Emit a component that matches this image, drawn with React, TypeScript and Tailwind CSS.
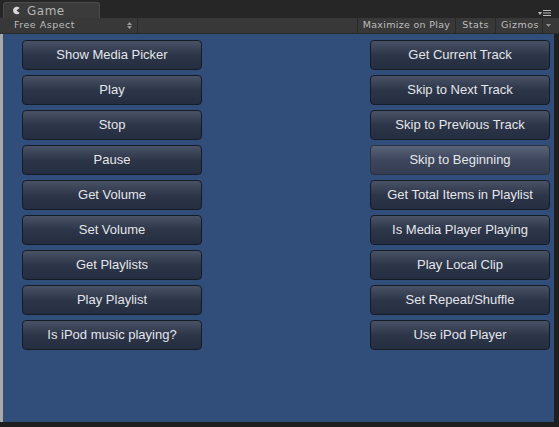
import React from 'react';

const leftButtons = [
  'Show Media Picker',
  'Play',
  'Stop',
  'Pause',
  'Get Volume',
  'Set Volume',
  'Get Playlists',
  'Play Playlist',
  'Is iPod music playing?',
];

const rightButtons = [
  'Get Current Track',
  'Skip to Next Track',
  'Skip to Previous Track',
  'Skip to Beginning',
  'Get Total Items in Playlist',
  'Is Media Player Playing',
  'Play Local Clip',
  'Set Repeat/Shuffle',
  'Use iPod Player',
];

function GuiButton({ label, hover }: { label: string; hover?: boolean }) {
  return (
    <div
      className={`w-[180px] h-[30px] rounded-[4px] border flex items-center justify-center text-[13px] text-[#e4e6ea] ${
        hover
          ? 'border-[#2a3142] bg-gradient-to-b from-[#5a6478] via-[#3d465c] to-[#343d52]'
          : 'border-[#161b28] bg-gradient-to-b from-[#4a5366] via-[#2d3549] to-[#252d40]'
      }`}
      style={{ fontFamily: '"Liberation Sans", Arial, sans-serif' }}
    >
      {label}
    </div>
  );
}

function Sep() {
  return <div className="w-px h-full bg-[#2a2a2a]" />;
}

export default function App() {
  return (
    <div
      className="w-[559px] h-[427px] bg-[#1f1f1f] flex flex-col overflow-hidden"
      style={{ fontFamily: '"DejaVu Sans", sans-serif' }}
    >
      {/* tab bar */}
      <div className="h-[18px] bg-[#262626] flex items-end pl-[3px] relative">
        <div className="w-[97px] h-[16px] bg-[#3b3b3b] rounded-t-[3px] border border-b-0 border-[#4a4a4a] flex items-center pl-[8px] gap-[6px]">
          <svg width="9" height="9" viewBox="0 0 10 10">
            <path d="M8.5 2.2 A4.2 4.2 0 1 0 8.5 7.8 L5 5 Z" fill="#d8d8d8" />
          </svg>
          <span className="text-[12px] text-[#b4b4b4] tracking-[0.5px]">Game</span>
        </div>
        <div className="absolute right-[8px] top-[10px] flex items-center gap-[1px]">
          <svg width="4" height="3" viewBox="0 0 4 3">
            <path d="M0 0 H4 L2 3 Z" fill="#bdbdbd" />
          </svg>
          <svg width="8" height="6" viewBox="0 0 8 6">
            <rect y="0" width="8" height="1" fill="#bdbdbd" />
            <rect y="2.5" width="8" height="1" fill="#bdbdbd" />
            <rect y="5" width="8" height="1" fill="#bdbdbd" />
          </svg>
        </div>
      </div>

      {/* toolbar */}
      <div className="h-[16px] bg-[#383838] border-b border-[#2a2a2a] flex items-center text-[9.5px] text-[#bdbdbd] tracking-[0.5px] pl-[3px] pr-[5px]">
        <div className="w-[134px] h-full flex items-center justify-between pl-[11px] pr-[5px]">
          <span>Free Aspect</span>
          <svg width="5" height="7" viewBox="0 0 5 7">
            <path d="M0 3 L2.5 0 L5 3 Z M0 4 L2.5 7 L5 4 Z" fill="#9a9a9a" />
          </svg>
        </div>
        <Sep />
        <div className="flex-1" />
        <Sep />
        <div className="px-[5px] h-full flex items-center tracking-[0.3px]">Maximize on Play</div>
        <Sep />
        <div className="px-[6px] h-full flex items-center">Stats</div>
        <Sep />
        <div className="pl-[5px] pr-[3px] h-full flex items-center">Gizmos</div>
        <Sep />
        <div className="px-[3px] h-full flex items-center">
          <svg width="5" height="3" viewBox="0 0 5 3">
            <path d="M0 0 H5 L2.5 3 Z" fill="#8f8f8f" />
          </svg>
        </div>
      </div>

      {/* game view */}
      <div className="flex h-[388px]">
        <div className="w-[3px] bg-[#a9a9a9]" />
        <div className="w-[551px] bg-[#314d79] flex justify-between pt-[6px] pl-[19px] pr-[4px]">
          <div className="flex flex-col gap-[5px]">
            {leftButtons.map((b) => (
              <GuiButton key={b} label={b} />
            ))}
          </div>
          <div className="flex flex-col gap-[5px]">
            {rightButtons.map((b) => (
              <GuiButton key={b} label={b} hover={b === 'Skip to Beginning'} />
            ))}
          </div>
        </div>
      </div>
    </div>
  );
}
